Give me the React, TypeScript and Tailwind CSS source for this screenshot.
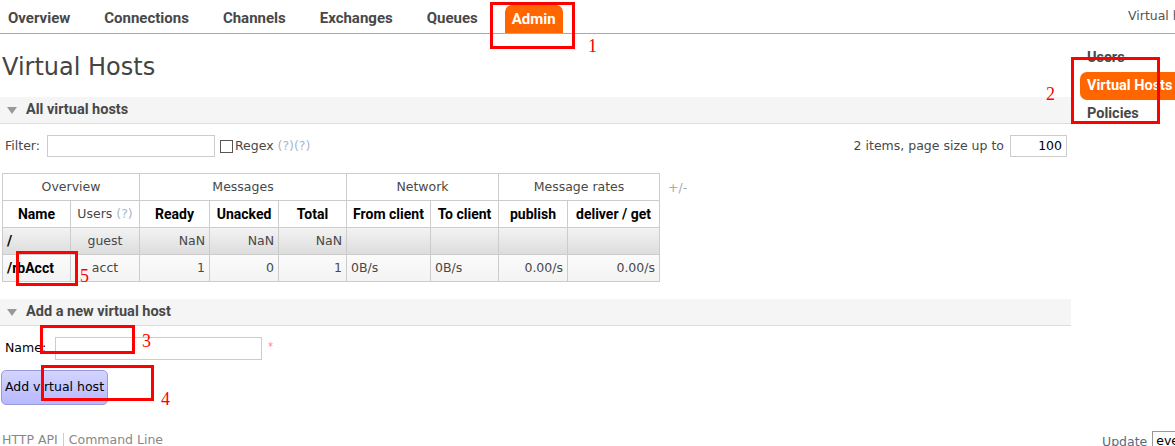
import React from "react";

const reg = "font-['DejaVu_Sans',sans-serif]";
const bold = "font-['Roboto',sans-serif] font-bold";

const navItems = ["Overview", "Connections", "Channels", "Exchanges", "Queues"];

function Help() {
  return <span className="text-[#a8b8cc]">(?)</span>;
}

function SectionHeader({ title }: { title: string }) {
  return (
    <div className="flex h-[27px] items-center border-b border-[#dddddd] bg-[#f5f5f5] pl-[7px]">
      <svg width="10" height="7" viewBox="0 0 10 7" className="mr-[9px]">
        <path d="M0 0 L10 0 L5 7 Z" fill="#999999" />
      </svg>
      <span className={`${bold} text-[14.5px] text-[#484848]`}>{title}</span>
    </div>
  );
}

function Mark({ n, box, num }: { n: string; box: string; num: string }) {
  return (
    <>
      <div className={`pointer-events-none absolute border-[3px] border-[#ff0000] ${box}`} />
      <div className={`pointer-events-none absolute font-['Liberation_Serif',serif] text-[18px] leading-none text-[#ff0000] ${num}`}>
        {n}
      </div>
    </>
  );
}

const td = "h-[27px] border border-[#cccccc] px-[4px]";
const th = `${td} ${bold} text-[14px] text-black`;

export default function App() {
  return (
    <div className={`relative h-[446px] w-[1175px] overflow-hidden bg-white text-[12.5px] text-[#484848] ${reg}`}>
      {/* top nav */}
      <div className="flex h-[34px] items-end border-b border-[#f29a3b]">
        <div className="flex flex-1 items-end gap-[34px] pl-[8px]">
          {navItems.map(n => (
            <span key={n} className={`${bold} mb-[6px] text-[15px] leading-[18px] text-[#484848]`}>
              {n}
            </span>
          ))}
          <span className={`${bold} -mx-[7px] flex h-[28px] items-center rounded-t-[7px] bg-[#ff6600] px-[7px] text-[15px] text-white`}>
            Admin
          </span>
        </div>
        <div className="mb-[7px] w-[47px] shrink-0 whitespace-nowrap text-[#555555]">Virtual host: All</div>
      </div>

      <div className="flex">
        {/* main */}
        <div className="w-[1071px] shrink-0">
          <h1 className="mt-[19px] pl-[2px] text-[24px] leading-[28px] text-[#444444]">Virtual Hosts</h1>

          <div className="mt-[16px]">
            <SectionHeader title="All virtual hosts" />
          </div>

          <div className="mt-[11px] flex h-[22px] items-center pl-[5px] pr-[4px]">
            <span>Filter:</span>
            <div className="ml-[7px] h-[22px] w-[168px] border border-[#cccccc]" />
            <div className="ml-[5px] h-[13px] w-[13px] border border-[#555555]" />
            <span className="ml-[2px]">Regex</span>
            <span className="ml-[4px] text-[#a8b8cc]">(?)(?)</span>
            <span className="ml-auto">2 items, page size up to</span>
            <div className="ml-[6px] flex h-[22px] w-[57px] items-center justify-end border border-[#cccccc] pr-[4px] text-black">100</div>
          </div>

          <div className="mt-[16px] flex items-start pl-[2px]">
            <table className="table-fixed border-collapse">
              <colgroup>
                <col className="w-[68px]" />
                <col className="w-[69px]" />
                <col className="w-[70px]" />
                <col className="w-[69px]" />
                <col className="w-[68px]" />
                <col className="w-[84px]" />
                <col className="w-[68px]" />
                <col className="w-[69px]" />
                <col className="w-[92px]" />
              </colgroup>
              <tbody>
                <tr className="text-center">
                  <td colSpan={2} className={td}>Overview</td>
                  <td colSpan={3} className={td}>Messages</td>
                  <td colSpan={2} className={td}>Network</td>
                  <td colSpan={2} className={td}>Message rates</td>
                </tr>
                <tr className="text-center">
                  <td className={th}>Name</td>
                  <td className={`${td} whitespace-nowrap`}>Users <Help /></td>
                  <td className={th}>Ready</td>
                  <td className={th}>Unacked</td>
                  <td className={th}>Total</td>
                  <td className={`${th} whitespace-nowrap`}>From client</td>
                  <td className={`${th} whitespace-nowrap`}>To client</td>
                  <td className={th}>publish</td>
                  <td className={`${th} whitespace-nowrap`}>deliver / get</td>
                </tr>
                <tr className="bg-linear-to-b from-[#f3f3f3] to-[#dcdcdc]">
                  <td className={th}>/</td>
                  <td className={`${td} text-center`}>guest</td>
                  <td className={`${td} text-right`}>NaN</td>
                  <td className={`${td} text-right`}>NaN</td>
                  <td className={`${td} text-right`}>NaN</td>
                  <td className={td} />
                  <td className={td} />
                  <td className={td} />
                  <td className={td} />
                </tr>
                <tr className="bg-linear-to-b from-[#fbfbfb] to-[#f3f3f3]">
                  <td className={th}>/rbAcct</td>
                  <td className={`${td} text-center`}>acct</td>
                  <td className={`${td} text-right`}>1</td>
                  <td className={`${td} text-right`}>0</td>
                  <td className={`${td} text-right`}>1</td>
                  <td className={td}>0B/s</td>
                  <td className={td}>0B/s</td>
                  <td className={`${td} text-right`}>0.00/s</td>
                  <td className={`${td} text-right`}>0.00/s</td>
                </tr>
              </tbody>
            </table>
            <span className="ml-[8px] mt-[6px] text-[#aaaaaa]">+/-</span>
          </div>

          <div className="mt-[17px]">
            <SectionHeader title="Add a new virtual host" />
          </div>

          <div className="mt-[11px] flex h-[23px] items-center pl-[5px]">
            <span className="text-black">Name:</span>
            <div className="ml-[9px] h-[23px] w-[207px] border border-[#cccccc]" />
            <span className="ml-[6px] -mt-[4px] text-[10px] text-[#ff8080]">*</span>
          </div>

          <button className="mt-[10px] ml-[1px] h-[35px] w-[107px] rounded-[5px] border border-[#9999dd] bg-linear-to-b from-[#d4d4ff] to-[#b8b8ff] text-[12.5px] text-black">
            Add virtual host
          </button>

          <div className="mt-[26px] flex items-center pl-[2px] text-[#888888]">
            <span>HTTP API</span>
            <span className="mx-[5px] h-[15px] border-l border-[#cccccc]" />
            <span>Command Line</span>
          </div>
        </div>

        {/* sidebar */}
        <div className={`${bold} flex flex-1 flex-col pl-[9px] pt-[14px] text-[14.5px] text-[#484848]`}>
          <span className="h-[24px] pl-[7px] leading-[20px]">Users</span>
          <span className="flex h-[28px] items-center whitespace-nowrap rounded-l-[7px] bg-[#ff6600] pl-[7px] text-white">Virtual Hosts</span>
          <span className="mt-[3px] pl-[7px] leading-[22px]">Policies</span>
        </div>
      </div>

      {/* update control */}
      <div className="absolute left-[1102px] top-[431px] flex items-center text-[#5a6a80]">
        <span>Update</span>
        <div className="ml-[5px] h-[22px] w-[40px] border border-[#999999] pl-[3px] text-black">every 5 seconds</div>
      </div>

      {/* annotation marks */}
      <Mark n="1" box="left-[490px] top-[2px] h-[47px] w-[85px]" num="left-[588px] top-[37px]" />
      <Mark n="2" box="left-[1071px] top-[57px] h-[67px] w-[89px]" num="left-[1046px] top-[85px]" />
      <Mark n="3" box="left-[40px] top-[325px] h-[29px] w-[95px]" num="left-[142px] top-[332px]" />
      <Mark n="4" box="left-[41px] top-[365px] h-[36px] w-[113px]" num="left-[161px] top-[390px]" />
      <Mark n="5" box="left-[16px] top-[251px] h-[35px] w-[62px]" num="left-[80px] top-[267px]" />
    </div>
  );
}
